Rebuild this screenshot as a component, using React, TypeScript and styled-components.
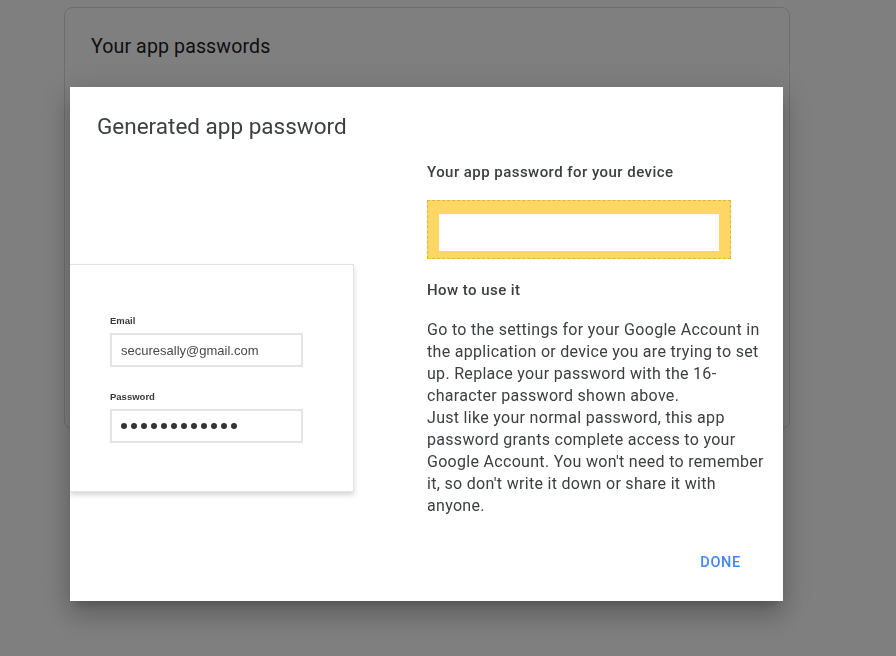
import React from "react";
import styled, { createGlobalStyle } from "styled-components";

const Global = createGlobalStyle`
  html, body { margin: 0; padding: 0; background: #ffffff; }
  body { font-family: Roboto, "Noto Sans", Arial, sans-serif; overflow: hidden; }
  * { box-sizing: border-box; }
`;

const Page = styled.div`
  width: 896px;
  height: 656px;
  padding: 7px 0 0 64px;
`;

const BgCard = styled.section`
  width: 726px;
  height: 422px;
  border: 1px solid #dadce0;
  border-radius: 8px;
  padding: 26px 26px;
`;

const BgTitle = styled.h2`
  margin: 0;
  font-size: 19.6px;
  font-weight: 400;
  line-height: 26px;
  color: #202124;
  letter-spacing: 0.1px;
`;

const Scrim = styled.div`
  position: fixed;
  inset: 0;
  background: rgba(0, 0, 0, 0.5);
  padding: 87px 0 0 70px;
`;

const Dialog = styled.div`
  width: 713px;
  height: 514px;
  background: #ffffff;
  box-shadow: 0 8px 10px -5px rgba(0, 0, 0, 0.2), 0 16px 24px 2px rgba(0, 0, 0, 0.14),
    0 6px 30px 5px rgba(0, 0, 0, 0.12);
  display: flex;
  flex-direction: column;
  overflow: hidden;
`;

const DialogTitle = styled.h1`
  margin: 25px 0 0 27px;
  font-size: 22.5px;
  font-weight: 400;
  line-height: 28px;
  color: #3c4043;
  letter-spacing: 0;
`;

const Body = styled.div`
  display: grid;
  grid-template-columns: 284px 342px;
  column-gap: 73px;
  align-items: start;
  margin-top: 22px;
`;

const Illustration = styled.div`
  margin-top: 102px;
  height: 228px;
  background: #ffffff;
  border: 1px solid #e3e3e3;
  border-left: none;
  box-shadow: 0 3px 5px rgba(0, 0, 0, 0.16);
  padding: 50px 0 0 40px;
  font-family: "Liberation Sans", Arial, sans-serif;
`;

const FieldLabel = styled.div`
  font-size: 9.5px;
  font-weight: 700;
  color: #3a3a3a;
  line-height: 12px;
  margin-bottom: 6px;
`;

const FieldBox = styled.div<{ $last?: boolean }>`
  width: 193px;
  height: 34px;
  border: 2px solid #e4e4e4;
  display: flex;
  align-items: center;
  padding-left: 9px;
  font-size: 13px;
  color: #4a4a4a;
  margin-bottom: ${(p) => (p.$last ? "0" : "24px")};
`;

const Dots = styled.div`
  display: flex;
  gap: 4px;
`;

const Dot = styled.span`
  width: 6px;
  height: 6px;
  border-radius: 50%;
  background: #333333;
`;

const Right = styled.div`
  display: flex;
  flex-direction: column;
`;

const Heading = styled.h3<{ $gap?: number }>`
  margin: ${(p) => p.$gap ?? 0}px 0 0;
  font-size: 15px;
  font-weight: 500;
  line-height: 20px;
  color: #3c4043;
  letter-spacing: 0.45px;
`;

const PasswordBox = styled.div`
  margin-top: 18px;
  width: 304px;
  height: 59px;
  background: #fdd663;
  border: 1px dashed #e2b53a;
  padding: 13px 11px 0;
`;

const PasswordField = styled.div`
  width: 280px;
  height: 37px;
  background: #ffffff;
`;

const Para = styled.p`
  margin: 19px 0 0;
  font-size: 16px;
  line-height: 22px;
  color: #3c4043;
  letter-spacing: 0.3px;
`;

const Footer = styled.div`
  margin-top: auto;
  display: flex;
  justify-content: flex-end;
  padding: 0 34px 28px 0;
`;

const DoneButton = styled.button`
  border: none;
  background: transparent;
  padding: 0 8px;
  font-family: Roboto, "Noto Sans", Arial, sans-serif;
  font-size: 14.5px;
  font-weight: 500;
  line-height: 20px;
  letter-spacing: 0.7px;
  color: #4285f4;
  cursor: pointer;
`;

export default function App() {
  return (
    <>
      <Global />
      <Page>
        <BgCard>
          <BgTitle>Your app passwords</BgTitle>
        </BgCard>
      </Page>
      <Scrim>
        <Dialog>
          <DialogTitle>Generated app password</DialogTitle>
          <Body>
            <Illustration>
              <FieldLabel>Email</FieldLabel>
              <FieldBox>securesally@gmail.com</FieldBox>
              <FieldLabel>Password</FieldLabel>
              <FieldBox $last>
                <Dots>
                  {Array.from({ length: 12 }).map((_, i) => (
                    <Dot key={i} />
                  ))}
                </Dots>
              </FieldBox>
            </Illustration>
            <Right>
              <Heading>Your app password for your device</Heading>
              <PasswordBox>
                <PasswordField />
              </PasswordBox>
              <Heading $gap={21}>How to use it</Heading>
              <Para>
                Go to the settings for your Google Account in the application or device you are
                trying to set up. Replace your password with the 16-character password shown above.
                <br />
                Just like your normal password, this app password grants complete access to your
                Google Account. You won't need to remember it, so don't write it down or share it
                with anyone.
              </Para>
            </Right>
          </Body>
          <Footer>
            <DoneButton>DONE</DoneButton>
          </Footer>
        </Dialog>
      </Scrim>
    </>
  );
}
